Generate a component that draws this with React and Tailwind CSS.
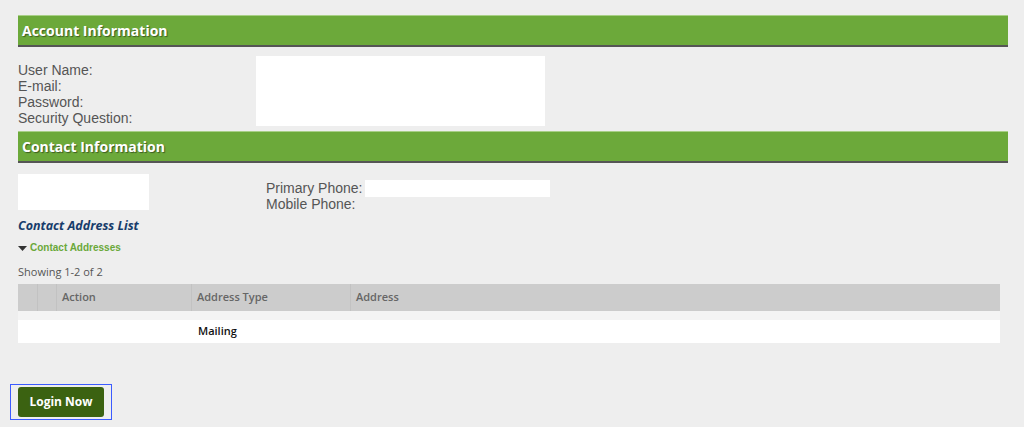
import React from 'react';

const font = { fontFamily: '"Open Sans", "Liberation Sans", sans-serif' };
const labelFont = { fontFamily: '"Liberation Sans", Arial, sans-serif' };

function SectionBar({ title }) {
  return (
    <div className="h-[32px] bg-[#6ca93a] border-b-2 border-[#555] border-t border-t-[#a8cf86] pl-1 flex items-center mr-[16px]">
      <span className="text-white font-bold text-[14px] [text-shadow:1px_1px_1px_rgba(0,0,0,0.45)]">{title}</span>
    </div>
  );
}

export default function App() {
  return (
    <div className="min-h-[427px] bg-[#eeeeee] pt-[15px] pl-[18px] text-[#555]" style={font}>
      <SectionBar title="Account Information" />

      {/* Account fields */}
      <div className="flex mt-[9px]">
        <div className="w-[238px] pt-[6px] text-[14px] leading-[16px]" style={labelFont}>
          <div>User Name:</div>
          <div>E-mail:</div>
          <div>Password:</div>
          <div>Security Question:</div>
        </div>
        <div className="w-[289px] h-[70px] bg-white" />
      </div>

      <div className="mt-[5px]">
        <SectionBar title="Contact Information" />
      </div>

      {/* Contact fields */}
      <div className="flex mt-[11px]">
        <div className="w-[131px] h-[36px] bg-white" />
        <div className="ml-[117px] pt-[6px] text-[14px] leading-[16px]" style={labelFont}>
          <div className="flex items-center h-[16px]">
            <span>Primary Phone:</span>
            <span className="ml-[3px] w-[185px] h-[17px] bg-white" />
          </div>
          <div className="h-[16px]">Mobile Phone:</div>
        </div>
      </div>

      <div className="mt-[6px] h-[16px] leading-[16px] text-[12.5px] font-bold italic text-[#173c6b]">Contact Address List</div>

      <div className="mt-[6px] h-[14px] flex items-center gap-[3px] text-[10px] font-bold text-[#6aa83a]" style={labelFont}>
        <svg width="9" height="5" viewBox="0 0 9 5" className="mt-[2px]"><path d="M0 0 L9 0 L4.5 5 Z" fill="#333" /></svg>
        <span>Contact Addresses</span>
      </div>

      <div className="mt-[10px] h-[16px] leading-[16px] text-[11px]">Showing 1-2 of 2</div>

      {/* Address table */}
      <div className="mt-[4px] mr-[24px] text-[11px]">
        <div className="flex h-[27px] bg-[#cccccc] font-semibold text-[#666]">
          <div className="w-[20px] border-r border-[#c2c2c2]" />
          <div className="w-[19px] border-r border-[#c2c2c2]" />
          <div className="w-[135px] pl-[5px] flex items-center border-r border-[#c2c2c2]">Action</div>
          <div className="w-[159px] pl-[5px] flex items-center border-r border-[#c2c2c2]">Address Type</div>
          <div className="flex-1 pl-[5px] flex items-center">Address</div>
        </div>
        <div className="h-[9px] bg-[#f4f4f4]" />
        <div className="flex h-[23px] bg-white items-center font-semibold text-[#111]">
          <div className="w-[180px]" />
          <div>Mailing</div>
        </div>
      </div>

      {/* Login */}
      <div className="mt-[41px] -ml-[8px] w-[102px] h-[36px] border border-[#3b5bff] flex items-center justify-center">
        <button className="w-[86px] h-[30px] rounded-[3px] bg-[#3b6211] text-white text-[12px] font-bold">
          Login Now
        </button>
      </div>
    </div>
  );
}
